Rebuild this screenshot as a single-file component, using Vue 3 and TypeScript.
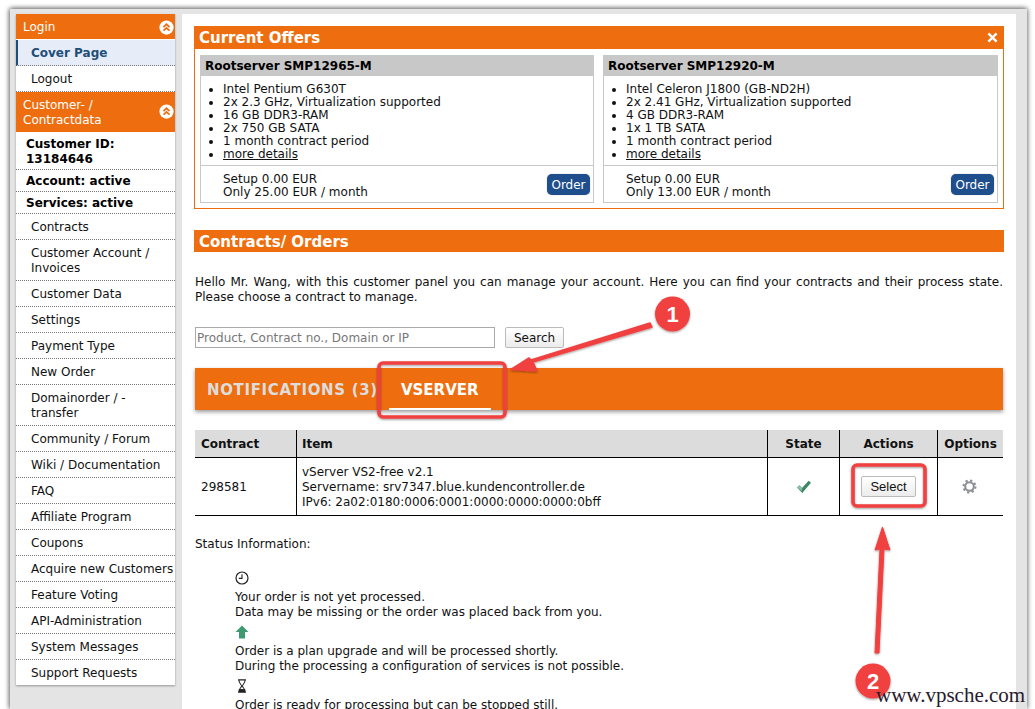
<script setup lang="ts">
interface NavRow { text: string; kind: 'head' | 'current' | 'link' | 'info' }
const nav: NavRow[] = [
  { text: 'Login', kind: 'head' },
  { text: 'Cover Page', kind: 'current' },
  { text: 'Logout', kind: 'link' },
  { text: 'Customer- / Contractdata', kind: 'head' },
  { text: 'Customer ID: 13184646', kind: 'info' },
  { text: 'Account: active', kind: 'info' },
  { text: 'Services: active', kind: 'info' },
  ...[
    'Contracts', 'Customer Account / Invoices', 'Customer Data', 'Settings', 'Payment Type', 'New Order',
    'Domainorder / - transfer', 'Community / Forum', 'Wiki / Documentation', 'FAQ', 'Affiliate Program', 'Coupons',
    'Acquire new Customers', 'Feature Voting', 'API-Administration', 'System Messages', 'Support Requests',
  ].map((text): NavRow => ({ text, kind: 'link' })),
]
const offers = [
  { name: 'Rootserver SMP12965-M', specs: ['Intel Pentium G630T', '2x 2.3 GHz, Virtualization supported', '16 GB DDR3-RAM', '2x 750 GB SATA', '1 month contract period'], price: '25.00' },
  { name: 'Rootserver SMP12920-M', specs: ['Intel Celeron J1800 (GB-ND2H)', '2x 2.41 GHz, Virtualization supported', '4 GB DDR3-RAM', '1x 1 TB SATA', '1 month contract period'], price: '13.00' },
]
</script>

<template>
  <div class="page">
    <div class="frame">
      <aside class="side">
        <template v-for="row in nav" :key="row.text">
          <div v-if="row.kind === 'head'" class="nav-head">
            <span>{{ row.text }}</span>
            <svg class="collapse" viewBox="0 0 16 16" width="15" height="15">
              <circle cx="8" cy="8" r="7.6" fill="#fff" />
              <path d="M4.8 7.6 8 4.6l3.2 3M4.8 11.4 8 8.4l3.2 3" fill="none" stroke="#ee6e0f" stroke-width="1.9" />
            </svg>
          </div>
          <div v-else :class="['nav-row', row.kind]">{{ row.text }}</div>
        </template>
      </aside>

      <main class="main">
        <section class="offers">
          <h2 class="bar offers-bar">
            <span>Current Offers</span>
            <svg viewBox="0 0 12 12" width="11" height="11"><path d="M1.5 1.5l9 9M10.5 1.5l-9 9" stroke="#fff" stroke-width="2.6" /></svg>
          </h2>
          <div class="offer-grid">
            <article v-for="offer in offers" :key="offer.name" class="card">
              <h3>{{ offer.name }}</h3>
              <ul>
                <li v-for="spec in offer.specs" :key="spec">{{ spec }}</li>
                <li><a>more details</a></li>
              </ul>
              <div class="card-foot">
                <div>Setup 0.00 EUR<br />Only {{ offer.price }} EUR / month</div>
                <button class="order">Order</button>
              </div>
            </article>
          </div>
        </section>

        <h2 class="bar contracts-bar">Contracts/ Orders</h2>
        <div class="inner">
          <p class="intro">Hello Mr. Wang, with this customer panel you can manage your account. Here you can find your contracts and their process state. Please choose a contract to manage.</p>

          <div class="search">
            <input placeholder="Product, Contract no., Domain or IP" />
            <button>Search</button>
          </div>

          <nav class="tabs">
            <span class="tab">NOTIFICATIONS (3)</span>
            <span class="tab on">VSERVER</span>
          </nav>

          <table>
            <thead>
              <tr><th class="c1">Contract</th><th class="c2">Item</th><th class="c3">State</th><th class="c4">Actions</th><th class="c5">Options</th></tr>
            </thead>
            <tbody>
              <tr>
                <td class="left first">298581</td>
                <td class="left">vServer VS2-free v2.1<br />Servername: srv7347.blue.kundencontroller.de<br />IPv6: 2a02:0180:0006:0001:0000:0000:0000:0bff</td>
                <td>
                  <svg viewBox="0 0 16 14" width="16" height="14"><path d="M1 7.5 3.4 5.2l2.6 2.9L12.6.8 15 2.8 6.3 13z" fill="#3c8a68" /><path d="M1 7.5 3.4 5.2l2.6 2.9L6 11z" fill="#8fbfa8" /></svg>
                </td>
                <td><button class="select">Select</button></td>
                <td>
                  <svg class="gear" viewBox="0 0 16 16" width="15" height="15">
                    <circle cx="8" cy="8" r="4.6" fill="none" stroke="#8b9095" stroke-width="2.2" />
                    <circle cx="8" cy="8" r="6.4" fill="none" stroke="#8b9095" stroke-width="2.2" stroke-dasharray="2.4 2.6" />
                    <circle cx="8" cy="8" r="2.2" fill="#fff" />
                  </svg>
                </td>
              </tr>
            </tbody>
          </table>

          <p class="status-title">Status Information:</p>
          <div class="legend">
            <div class="entry">
              <svg viewBox="0 0 14 14" width="14" height="14"><circle cx="7" cy="7" r="6" fill="none" stroke="#222" stroke-width="1.2" /><path d="M7 3.2V7.4H3.8" fill="none" stroke="#222" stroke-width="1.1" /></svg>
              <p>Your order is not yet processed.<br />Data may be missing or the order was placed back from you.</p>
            </div>
            <div class="entry">
              <svg viewBox="0 0 14 14" width="14" height="14"><path d="M7 .5 13.5 7H10v6.5H4V7H.5z" fill="#3f9a72" /></svg>
              <p>Order is a plan upgrade and will be processed shortly.<br />During the processing a configuration of services is not possible.</p>
            </div>
            <div class="entry">
              <svg viewBox="0 0 14 16" width="14" height="15"><path d="M2.5 1h9M2.5 15h9M3.500 1.500c0 4 3 4.600 3 6.500s-3 2.500-3 6.500M10.500 1.500c0 4-3 4.600-3 6.500s3 2.500 3 6.500" fill="none" stroke="#222" stroke-width="1.200" /><path d="M3.500 11.500h7v3.500h-7z" fill="#222" /></svg>
              <p>Order is ready for processing but can be stopped still.</p>
            </div>
          </div>
        </div>
      </main>
    </div>

    <svg class="marks" viewBox="0 0 1035 709" width="1035" height="709">
      <defs>
        <filter id="sh" x="-20%" y="-20%" width="140%" height="140%"><feDropShadow dx="0" dy="1" stdDeviation="0.8" flood-color="#000" flood-opacity="0.4" /></filter>
      </defs>
      <g filter="url(#sh)" fill="#f04040">
        <rect x="379" y="363" width="126" height="54" rx="4" fill="none" stroke="#f04040" stroke-width="3.600" />
        <rect x="853" y="465" width="72" height="41" rx="4" fill="none" stroke="#f04040" stroke-width="3.600" />
        <path d="M652 327 533 362 537 371 511 369.500 529 358 531 360 650 323z" stroke="#f04040" stroke-width="1.500" stroke-linejoin="round" />
        <path d="M875 653 880 549 875 550 882.500 527 890 550 884 549 879 653z" stroke="#f04040" stroke-width="1" stroke-linejoin="round" />
        <circle cx="672.500" cy="314" r="17.500" />
        <circle cx="873" cy="681" r="17.500" />
      </g>
      <text x="672.500" y="322" class="num">1</text>
      <text x="873" y="689" class="num">2</text>
    </svg>
    <div class="watermark">www.vpsche.com</div>
  </div>
</template>

<style scoped>
.page { position: relative; width: 1035px; height: 709px; overflow: hidden; background: #fff; color: #111; font: 12px/15px "DejaVu Sans", Verdana, sans-serif; }
.frame { display: flex; width: 1017px; height: 700px; margin: 9px 0 0 10px; box-sizing: border-box; border: solid #e4e4e4; border-width: 5px 11px 0 6px; background: #e4e4e4; box-shadow: 0 -1px 5px rgba(0,0,0,.35), -1px 0 5px rgba(0,0,0,.35), 1px 0 5px rgba(0,0,0,.2); }
.side { flex: none; width: 159px; align-self: flex-start; background: #fff; box-shadow: 0 1px 2px rgba(0,0,0,.35); margin-right: 7px; }
.nav-head { display: flex; align-items: center; justify-content: space-between; box-sizing: border-box; padding: 6px 1px 4px 7px; background: #ee6e0f; color: #fff; border-bottom: 1px solid #fff; }
.nav-head span { max-width: 100px; }
.nav-head:first-child { height: 26px; }
.collapse { flex: none; margin-top: -3px; }
.nav-head:first-child .collapse { margin-top: -1px; }
.nav-row { padding: 6px 0 4px 15px; border-bottom: 1px dotted #777; }
.nav-row:last-child { border-bottom: 0; }
.nav-row.current { padding-left: 13px; border-left: 2px solid #1f4e79; background: #e6edf8; color: #1f4e79; font-weight: 700; }
.nav-row.info { padding: 4px 30px 2px 10px; font-weight: 700; color: #000; }
.main { flex: 1; min-width: 0; background: #fff; padding: 12px 12px 0 12px; overflow: hidden; }
.bar { display: flex; align-items: center; justify-content: space-between; margin: 0; padding: 1px 6px 0 5px; background: #ee6e0f; color: #fff; font-size: 15px; line-height: 22px; }
.bar svg { margin-top: -2px; }
.offers { border: 1px solid #ee6e0f; }
.offers-bar { margin: -1px -1px 0; }
.offer-grid { display: grid; grid-template-columns: 394px 395px; column-gap: 9px; padding: 6px 5px 5px; }
.card { border: 1px solid #c8c8c8; }
.card h3 { margin: 0; padding: 1px 4px 0; background: #c8c8c8; color: #000; font-size: 12px; line-height: 19px; }
.card ul { margin: 0; padding: 7px 0 4px 22px; line-height: 13px; border-bottom: 1px solid #c8c8c8; }
.card a { text-decoration: underline; }
.card-foot { display: flex; align-items: flex-start; justify-content: space-between; padding: 7px 3px 3px 22px; line-height: 13px; }
.order { height: 21px; width: 43px; margin-top: 1px; padding: 0; border: 0; border-radius: 5px; background: #1f4e8c; color: #fff; font: 12px "DejaVu Sans", sans-serif; box-shadow: 0 0 1px #777; }
.contracts-bar { margin-top: 21px; padding-top: 2px; line-height: 20px; }
.inner { margin: 0 1px; }
.intro { margin: 23px 0 0; text-align: justify; }
.search { display: flex; gap: 10px; margin-top: 22px; }
.search input { box-sizing: border-box; width: 300px; height: 21px; padding: 0 1px; border: 1px solid #aaa; font: 12px "DejaVu Sans", sans-serif; }
.search input::placeholder { color: #777; opacity: 1; }
.search button, .select { padding: 0; border: 1px solid #bbb; border-radius: 2px; background: linear-gradient(#fff, #ececec); color: #111; font: 12px "DejaVu Sans", sans-serif; }
.search button { width: 59px; height: 21px; }
.tabs { display: flex; height: 42px; margin-top: 20px; background: #ee6e0f; box-shadow: 0 2px 4px rgba(0,0,0,.4); font-size: 15px; font-weight: 700; }
.tab { box-sizing: border-box; height: 42px; padding: 0 12px; line-height: 45px; color: #dddddd; letter-spacing: .65px; white-space: nowrap; }
.tab.on { width: 102px; padding: 0; margin-left: -1px; text-align: center; color: #fff; letter-spacing: 0; border-bottom: 2px solid #fff; }
table { width: 808px; margin-top: 20px; border-collapse: collapse; table-layout: fixed; border-bottom: 1px solid #000; }
th { height: 26px; padding: 1px 0 0; background: #dcdcdc; color: #111; font-size: 12px; border-bottom: 1px solid #000; border-left: 1px solid #000; }
th:first-child, td.first { border-left: 0; }
th.c1, th.c2 { text-align: left; }
th.c1 { padding-left: 6px; }
th.c2 { padding-left: 5px; }
td { height: 55px; padding: 2px 0 0; text-align: center; vertical-align: middle; border-left: 1px solid #000; line-height: 15px; }
td.left { text-align: left; padding-left: 5px; }
td.first { padding-left: 6px; }
td svg { display: block; margin: -2px auto 0; }
td svg.gear { position: relative; left: -1px; }
.c1 { width: 95px; }
.c2 { width: 465px; }
.c3 { width: 71px; }
.c4 { width: 97px; }
.select { display: block; width: 55px; height: 21px; margin: -3px auto 0; font-family: "Liberation Sans", sans-serif; font-size: 13px; }
.status-title { margin: 21px 0 0; }
.legend { margin: 19px 0 0 40px; }
.entry { margin-bottom: 5px; }
.entry svg { display: block; height: 14px; margin-bottom: 5px; }
.entry p { margin: 0; }
.marks { position: absolute; left: 0; top: 0; pointer-events: none; }
.num { fill: #fff; font: 700 22px "Liberation Sans", sans-serif; text-anchor: middle; }
.watermark { position: absolute; left: 876px; top: 683px; color: #2a1a2c; font: 21px/24px "Liberation Serif", serif; white-space: nowrap; }
</style>

<style>
html, body { margin: 0; background: #fff; }
</style>
